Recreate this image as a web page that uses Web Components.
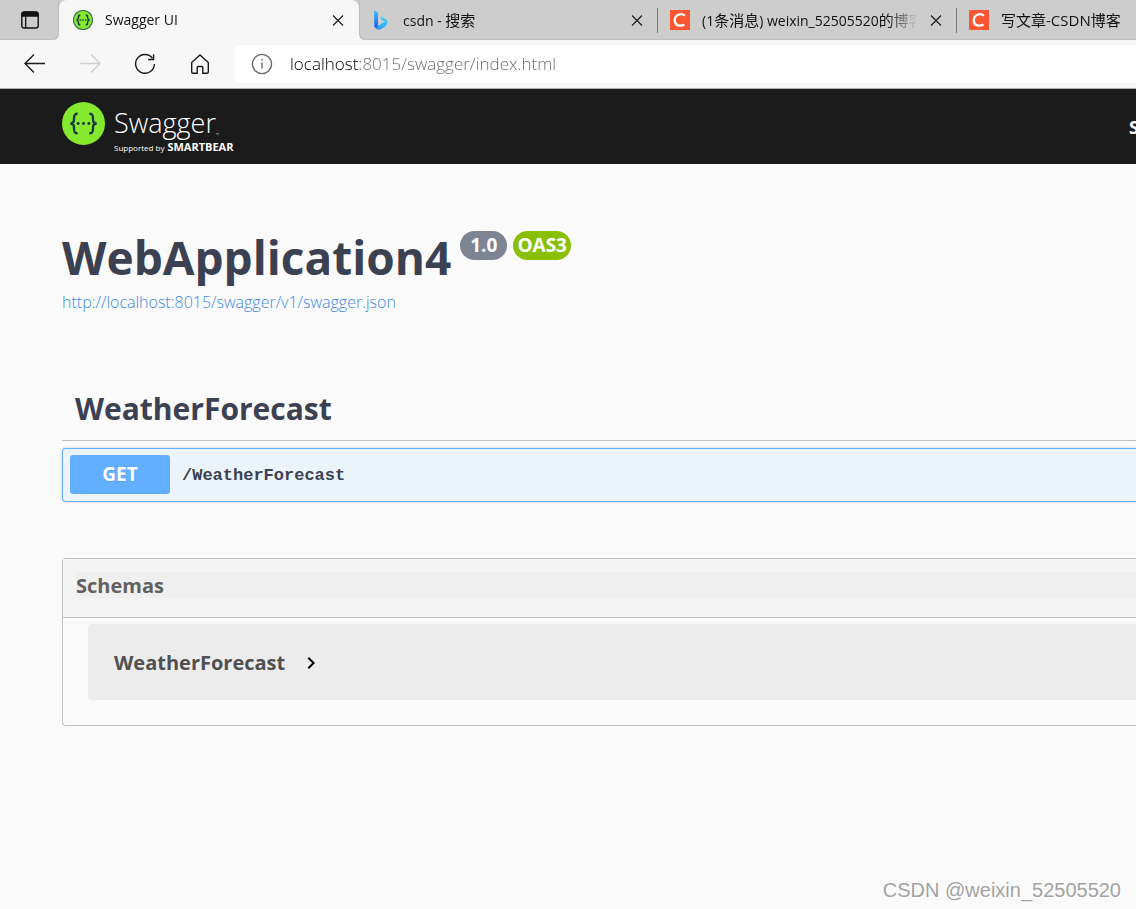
<!DOCTYPE html>
<html lang="en">
<head>
<meta charset="utf-8">
<meta name="viewport" content="width=device-width, initial-scale=1">
<title>Swagger UI</title>
<style>
  body { margin: 0; background: #fafafa; font-family: "Open Sans", "Noto Sans CJK SC", sans-serif; color: #3b4151; }
</style>
</head>
<body>
<app-window></app-window>

<template id="t-window">
  <style>
    :host { display: flex; flex-direction: column; min-height: 100vh; position: relative; overflow: hidden; }
    main { padding: 63px 0 40px 62px; }
    op-section { margin-top: 75px; }
    schema-panel { margin-top: 56px; }
    .mark { position: absolute; right: 15px; bottom: 7px; font: 20px/24px "Liberation Sans", sans-serif; color: #a2a2a2; text-shadow: 1px 1px 0 #fff; }
  </style>
  <tab-strip></tab-strip>
  <address-bar></address-bar>
  <swagger-topbar></swagger-topbar>
  <main>
    <api-info></api-info>
    <op-section></op-section>
    <schema-panel></schema-panel>
  </main>
  <span class="mark">CSDN @weixin_52505520</span>
</template>

<template id="t-strip">
  <style>
    :host { display: flex; height: 40px; background: #f7f7f7; }
    .menu { flex: none; width: 59px; border: 0; padding: 0; background: #cdcdcd; border-radius: 0 0 6px 0; box-shadow: inset -1px -1px 1px #bdbdbd; display: flex; align-items: center; justify-content: center; }
    .rest { flex: 1; min-width: 0; display: flex; background: #cdcdcd; border-radius: 0 0 0 6px; box-shadow: inset 1px -1px 1px #bdbdbd; overflow: hidden; }
    .cjk { font-size: 15px; }
    .corner { flex: none; display: flex; width: 300px; background: #cdcdcd; }
    browser-tab[active] { background: #f7f7f7; border-radius: 8px 8px 0 0; }
  </style>
  <button class="menu" aria-label="Tab actions">
    <svg width="20" height="20" viewBox="0 0 20 20"><rect x="1.8" y="2" width="16.4" height="16" rx="2.6" fill="none" stroke="#111" stroke-width="1.4"/><path d="M1.5 6.8V4.2A2.7 2.7 0 0 1 4.2 1.5h11.6a2.7 2.7 0 0 1 2.7 2.7v2.6z" fill="#111"/><path d="M5.7 6v12" stroke="#111" stroke-width="1.3"/></svg>
  </button>
  <div class="corner"><browser-tab active>
    <svg slot="icon" width="20" height="20" viewBox="0 0 44 44"><circle cx="22" cy="22" r="21" fill="#85ea2d" stroke="#3c6a4c" stroke-width="2.5"/><g fill="none" stroke="#173647" stroke-width="3.2"><path d="M16 11c-4 0-4 2-4 5s0 5-4 6c4 1 4 3 4 6s0 5 4 5M28 11c4 0 4 2 4 5s0 5 4 6c-4 1-4 3-4 6s0 5-4 5"/></g><g fill="#173647"><circle cx="16" cy="22" r="1.9"/><circle cx="22" cy="22" r="1.9"/><circle cx="28" cy="22" r="1.9"/></g></svg>
    Swagger UI</browser-tab></div>
  <div class="rest">
    <browser-tab>
      <svg slot="icon" width="20" height="20" viewBox="0 0 20 20"><defs><linearGradient id="a" x1="0" y1="0" x2="0" y2="1"><stop offset="0" stop-color="#37bdff"/><stop offset="1" stop-color="#1f5fe8"/></linearGradient><linearGradient id="b" x1="0" y1="1" x2="1" y2="0"><stop offset="0" stop-color="#2f8df5"/><stop offset="1" stop-color="#39d2f8"/></linearGradient></defs><path d="M3.6 15.6c2 1 4-.2 5.600-1.200l3-1.800 3.800-2.400c1.100 3.200-.2 5.400-2.200 6.600l-3.200 2c-3.600 2-7 .2-7-3.200z" fill="url(#b)"/><path d="M3.200.600l3 1.300c.7.400.9.900.9 1.600v11.600c0 1.600-1 2.600-2.100 2.600s-1.800-1-1.800-2.400z" fill="url(#a)"/><path d="M8.600 6.200l5.400 2.500c1.900.9 2.700 2.600 2.300 4.600-.7-1.300-1.400-1.800-2.400-2.100l-2.500-.8c-.6-.2-.8-.6-1-1.100z" fill="#39c6f5"/></svg>
      csdn - <span class="cjk">搜索</span></browser-tab>
    <browser-tab divided>
      <csdn-icon slot="icon"></csdn-icon>
      (1<span class="cjk">条消息</span>) weixin_52505520<span class="cjk">的博客</span></browser-tab>
    <browser-tab divided>
      <csdn-icon slot="icon"></csdn-icon>
      <span class="cjk">写文章-CSDN博客</span></browser-tab>
  </div>
</template>

<template id="t-csdn">
  <style>:host, svg { display: block; }</style>
  <svg width="20" height="20" viewBox="0 0 20 20"><path d="M0 0h20v20H0z" fill="#fc5531"/><path d="M15 5.600C11 2.700 4.800 4.500 4.800 10.400c0 5.400 5.600 6.400 9.700 4.100" fill="none" stroke="#fff" stroke-width="2.300"/></svg>
</template>

<template id="t-tab">
  <style>
    :host { flex: none; box-sizing: border-box; width: 299px; height: 40px; display: flex; align-items: center; padding: 0 14px 0 12px; position: relative; color: #111; font-size: 14px; line-height: 20px; }
    :host([active]) { width: 300px; padding: 0 14px; }
    :host([divided])::before { content: ""; position: absolute; left: -1px; top: 8px; width: 1px; height: 25px; background: #777; }
    ::slotted([slot="icon"]) { display: block; flex: none; margin-right: 12px; }
    .title { flex: 1; min-width: 0; white-space: nowrap; overflow: hidden; -webkit-mask-image: linear-gradient(90deg, #000 calc(100% - 30px), transparent); mask-image: linear-gradient(90deg, #000 calc(100% - 30px), transparent); }
    button { flex: none; width: 14px; height: 14px; padding: 0; margin-left: 12px; border: 0; background: none; }
    svg { display: block; }
  </style>
  <slot name="icon"></slot>
  <span class="title"><slot></slot></span>
  <button aria-label="Close tab"><svg width="14" height="14" viewBox="0 0 14 14"><path d="M2 2.500l10 10M12 2.500l-10 10" stroke="#222" stroke-width="1.300"/></svg></button>
</template>

<template id="t-address">
  <style>
    :host { display: flex; align-items: center; height: 48px; background: #f7f7f7; border-bottom: 1px solid #aeb2b2; }
    nav { flex: none; display: flex; gap: 31px; padding-left: 23px; width: 212px; box-sizing: content-box; }
    nav button { width: 24px; height: 24px; padding: 0; border: 0; background: none; }
    svg { display: block; fill: none; stroke: #1b1b1b; stroke-width: 1.400; }
    button:disabled svg { stroke: #cfcfcf; }
    label { flex: 1; min-width: 0; height: 38px; display: flex; align-items: center; gap: 17px; padding-left: 16px; background: #fff; border-radius: 6px 0 0 6px; }
    label svg { flex: none; stroke: #666; }
    input { flex: 1; min-width: 0; border: 0; padding: 0; outline: 0; height: 26px; font: 350 17px/26px "Open Sans", sans-serif; color: transparent; background: linear-gradient(90deg, #000 70px, #666 70px); -webkit-background-clip: text; background-clip: text; }
  </style>
  <nav aria-label="Browser">
    <button aria-label="Back"><svg width="24" height="24" viewBox="0 0 24 24"><path d="M22 11.500H2.500M11 2.500l-9 9 9 9"/></svg></button>
    <button aria-label="Forward" disabled><svg width="24" height="24" viewBox="0 0 24 24"><path d="M2 11.500h19.500M13 2.500l9 9-9 9"/></svg></button>
    <button aria-label="Refresh"><svg width="24" height="24" viewBox="0 0 24 24"><path d="M19.500 6.200A9.400 9.400 0 1 0 21.400 12M20.600 2.200v5.300h-5.600"/></svg></button>
    <button aria-label="Home"><svg width="24" height="24" viewBox="0 0 24 24"><path d="M3.700 10.600L12 3l8.300 7.600V20a1.200 1.200 0 0 1-1.200 1.200h-4.300v-5.700a1 1 0 0 0-1-1h-3.600a1 1 0 0 0-1 1v5.700H4.900A1.200 1.200 0 0 1 3.700 20z"/></svg></button>
  </nav>
  <label><svg width="22" height="22" viewBox="0 0 22 22"><circle cx="11" cy="11" r="9.600"/><path d="M11 9.500v6M11 6v1.600"/></svg>
    <input type="text" aria-label="Address" value="localhost:8015/swagger/index.html"></label>
</template>

<template id="t-topbar">
  <style>
    :host { display: flex; align-items: center; justify-content: space-between; height: 75px; padding-left: 62px; background: #1b1b1b; color: #fff; }
    a { display: flex; align-items: center; gap: 9px; color: #fff; text-decoration: none; }
    a svg { margin-bottom: 6px; }
    .words { display: flex; flex-direction: column; padding-top: 3px; }
    .name { display: flex; align-items: flex-end; font-size: 27px; line-height: 38px; font-weight: 350; }
    .tm { font-size: 4px; line-height: 14px; }
    .by { display: flex; align-items: baseline; gap: 3px; font-size: 8px; line-height: 10px; }
    .by b { font-size: 11px; font-weight: 700; }
    .pick { width: 7px; font-size: 18px; line-height: 24px; font-weight: 700; }
  </style>
  <a href="#" aria-label="Swagger">
    <svg width="43" height="43" viewBox="0 0 44 44"><circle cx="22" cy="22" r="22" fill="#85ea2d"/><g fill="none" stroke="#173647" stroke-width="2.400"><path d="M16 12c-3.500 0-3.700 1.800-3.700 4.500 0 3.200.2 4.900-3.600 5.500 3.800.6 3.600 2.300 3.600 5.500 0 2.700.2 4.500 3.700 4.500M28 12c3.500 0 3.700 1.800 3.700 4.500 0 3.200-.2 4.900 3.600 5.500-3.800.6-3.600 2.300-3.600 5.500 0 2.700-.2 4.500-3.700 4.500"/></g><g fill="#173647"><circle cx="16.500" cy="22" r="1.500"/><circle cx="22" cy="22" r="1.500"/><circle cx="27.500" cy="22" r="1.500"/></g></svg>
    <span class="words"><span class="name">Swagger<span class="tm">™</span></span><span class="by">Supported by <b>SMARTBEAR</b></span></span>
  </a>
  <span class="pick">S</span>
</template>

<template id="t-info">
  <style>
    :host { display: block; }
    header { display: flex; align-items: flex-start; gap: 6px; }
    h1 { margin: 0 3px 0 0; font-size: 46px; line-height: 60px; font-weight: 700; }
    version-badge { margin-top: 4px; }
    a { display: block; width: max-content; margin-top: 3px; font-size: 16px; line-height: 24px; font-weight: 350; color: #4089e0; text-decoration: none; }
  </style>
  <header><h1>WebApplication4</h1><version-badge>1.0</version-badge><version-badge kind="oas">OAS3</version-badge></header>
  <a href="#">http://localhost:8015/swagger/v1/swagger.json</a>
</template>

<template id="t-badge">
  <style>
    :host { display: block; padding: 0 10px; border-radius: 15px; background: #7d8492; color: #fff; font-size: 19px; line-height: 29px; font-weight: 700; }
    :host([kind="oas"]) { padding: 0 4px; background: #89bf04; }
  </style>
  <slot></slot>
</template>

<template id="t-op">
  <style>
    :host { display: block; }
    h2 { margin: 0 0 7px; padding: 0 0 11px 13px; border-bottom: 1px solid #bfc1c5; font-size: 30px; line-height: 40px; font-weight: 700; }
    .row { box-sizing: border-box; width: 100%; height: 54px; display: flex; align-items: center; gap: 12px; padding: 0 0 1px 7px; border: 1px solid #61affe; border-right: 0; border-radius: 4px 0 0 4px; background: #ebf3fb; box-shadow: 0 0 3px rgba(0,0,0,.19); color: #3b4151; text-align: left; }
    .verb { width: 100px; border-radius: 3px; background: #61affe; color: #fff; font: 700 19px/39px "Open Sans", sans-serif; text-align: center; text-shadow: 0 1px 0 rgba(0,0,0,.1); }
    .path { padding-top: 2px; font: 700 17px/24px "Liberation Mono", monospace; }
  </style>
  <h2>WeatherForecast</h2>
  <button class="row"><span class="verb">GET</span><span class="path">/WeatherForecast</span></button>
</template>

<template id="t-schema">
  <style>
    :host { display: block; border: 1px solid #bfc1c5; border-right: 0; border-radius: 4px 0 0 4px; }
    h2 { margin: 0; padding: 13px 0 19px 13px; background: #f4f4f4; border-bottom: 1px solid #bfc1c5; font-size: 20px; line-height: 26px; }
    button { display: block; width: 100%; padding: 1px 0 0; border: 0; text-align: left; font: 700 20px/25px "Open Sans", sans-serif; color: #606060; background: #efefef; }
    .model { margin: 6px 0 25px 25px; background: #ececec; border-radius: 4px 0 0 4px; padding: 25px 0 25px 26px; }
    .model button { display: flex; align-items: center; gap: 14px; color: #505050; background: none; }
    svg { display: block; margin: 1px 0 0; }
  </style>
  <h2><button>Schemas</button></h2>
  <div class="model"><button>WeatherForecast<svg width="24" height="24" viewBox="0 0 24 24"><path d="M10 6L8.590 7.410 13.170 12l-4.580 4.590L10 18l6-6z"/></svg></button></div>
</template>

<script>
  const parts = {
    'csdn-icon': 't-csdn', 'browser-tab': 't-tab', 'tab-strip': 't-strip',
    'address-bar': 't-address', 'swagger-topbar': 't-topbar', 'version-badge': 't-badge',
    'api-info': 't-info', 'op-section': 't-op', 'schema-panel': 't-schema', 'app-window': 't-window'
  };
  for (const [tag, id] of Object.entries(parts)) {
    customElements.define(tag, class extends HTMLElement {
      constructor() {
        super();
        this.attachShadow({ mode: 'open' }).append(document.getElementById(id).content.cloneNode(true));
      }
    });
  }
</script>
</body>
</html>
